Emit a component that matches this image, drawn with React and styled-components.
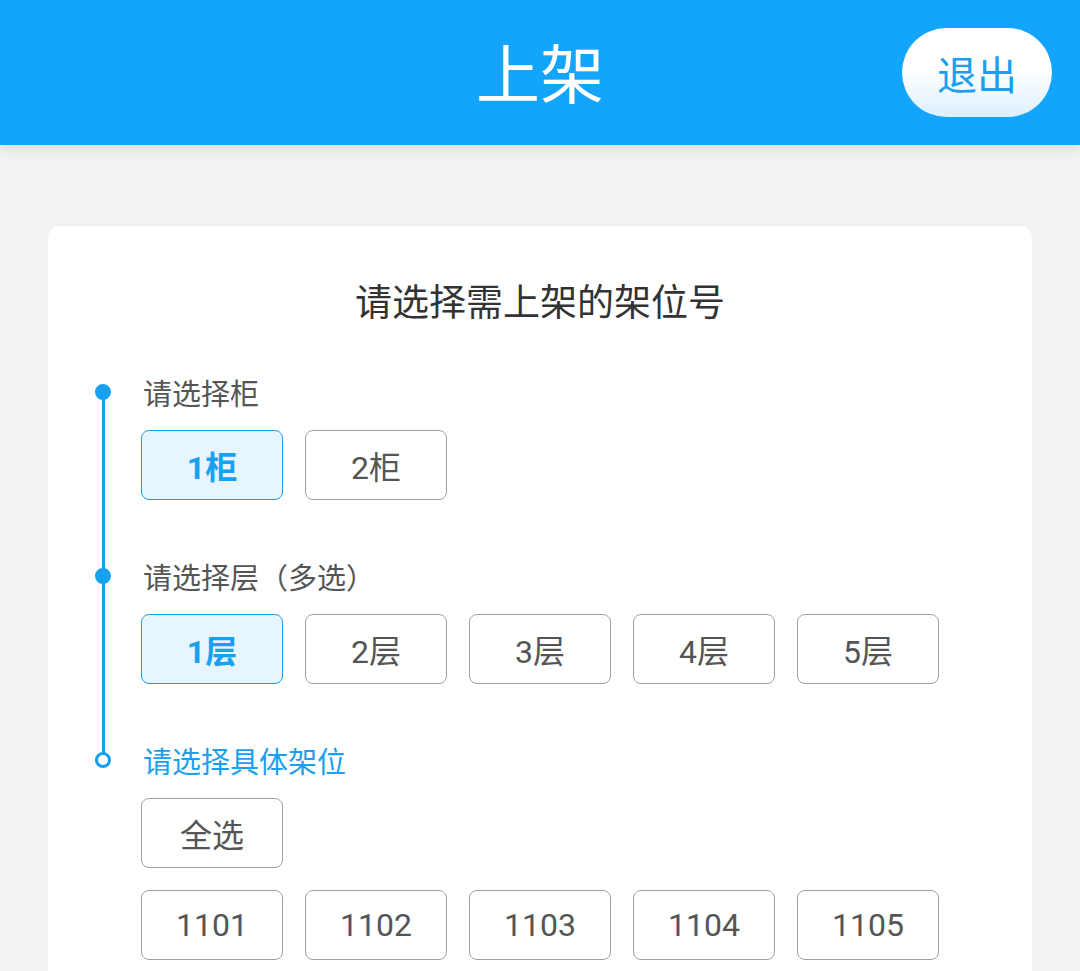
import React, { useState } from "react";
import styled, { createGlobalStyle, css } from "styled-components";

const color = {
    primary: "#12a5fb",
    accent: "#1aa0f0",
    text: "#333333",
    label: "#555555",
    border: "#a0a0a0",
    page: "#f2f2f2",
};

const GlobalStyle = createGlobalStyle`
    html, body {
        margin: 0;
        padding: 0;
        background: ${color.page};
        font-family: "Noto Sans CJK SC", "Noto Sans", sans-serif;
    }
    * {
        box-sizing: border-box;
    }
`;

const Page = styled.div`
    min-height: 971px;
    background: ${color.page};
    overflow: hidden;
`;

const Header = styled.header`
    position: relative;
    height: 145px;
    background: ${color.primary};
    box-shadow: 0 4px 10px rgba(60, 90, 130, 0.15);
    display: flex;
    align-items: center;
    justify-content: center;
`;

const Title = styled.h1`
    margin: 0 0 6px;
    color: #fff;
    font-size: 64px;
    font-weight: 400;
    line-height: 1;
`;

const ExitButton = styled.button`
    position: absolute;
    right: 28px;
    top: 28px;
    width: 150px;
    height: 89px;
    border: none;
    border-radius: 45px;
    background: linear-gradient(to bottom, #ffffff 45%, #dcf0fd 100%);
    color: ${color.accent};
    font-family: inherit;
    font-size: 40px;
    cursor: pointer;
`;

const Card = styled.main`
    margin: 81px 48px 0;
    min-height: 800px;
    background: #fff;
    border-radius: 12px;
    padding: 50px 0 0 93px;
`;

const CardTitle = styled.h2`
    margin: 0 0 48px -93px;
    text-align: center;
    font-size: 37px;
    line-height: 48px;
    font-weight: 400;
    color: ${color.text};
`;

const Step = styled.section`
    position: relative;
    margin-bottom: 56px;

    &::before {
        content: "";
        position: absolute;
        left: -46px;
        top: 12px;
        width: 16px;
        height: 16px;
        border-radius: 50%;
        box-sizing: border-box;
        background: ${(p) => (p.$open ? "#fff" : color.accent)};
        border: 3px solid ${color.accent};
        z-index: 1;
    }

    ${(p) =>
        !p.$last &&
        css`
            &::after {
                content: "";
                position: absolute;
                left: -39.5px;
                top: 20px;
                bottom: -76px;
                width: 3px;
                background: ${color.accent};
            }
        `}
`;

const Label = styled.div`
    font-size: 29px;
    line-height: 40px;
    color: ${(p) => (p.$active ? color.accent : color.label)};
    margin-left: 2px;
`;

const Options = styled.div`
    display: flex;
    flex-wrap: wrap;
    gap: 22px;
    margin-top: ${(p) => (p.$tight ? "22px" : "18px")};
    max-width: 820px;
`;

const Option = styled.button`
    width: 142px;
    height: 70px;
    border-radius: 8px;
    border: 1px solid ${(p) => (p.$selected ? color.accent : color.border)};
    background: ${(p) => (p.$selected ? "#e6f5fe" : "#fff")};
    color: ${(p) => (p.$selected ? color.accent : color.label)};
    font-family: Roboto, "Noto Sans CJK SC", sans-serif;
    font-size: 32px;
    font-weight: ${(p) => (p.$selected ? 700 : 400)};
    cursor: pointer;
    padding: 0;
`;

const cabinets = ["1柜", "2柜"];
const layers = ["1层", "2层", "3层", "4层", "5层"];
const slots = ["1101", "1102", "1103", "1104", "1105"];

const App = () => {
    const [cabinet, setCabinet] = useState("1柜");
    const [picked, setPicked] = useState(["1层"]);

    const toggle = (l) =>
        setPicked((prev) =>
            prev.includes(l) ? prev.filter((x) => x !== l) : [...prev, l]
        );

    return (
        <Page>
            <GlobalStyle />
            <Header>
                <Title>上架</Title>
                <ExitButton>退出</ExitButton>
            </Header>
            <Card>
                <CardTitle>请选择需上架的架位号</CardTitle>
                <Step>
                    <Label>请选择柜</Label>
                    <Options>
                        {cabinets.map((c) => (
                            <Option
                                key={c}
                                $selected={cabinet === c}
                                onClick={() => setCabinet(c)}
                            >
                                {c}
                            </Option>
                        ))}
                    </Options>
                </Step>
                <Step>
                    <Label>请选择层（多选）</Label>
                    <Options>
                        {layers.map((l) => (
                            <Option
                                key={l}
                                $selected={picked.includes(l)}
                                onClick={() => toggle(l)}
                            >
                                {l}
                            </Option>
                        ))}
                    </Options>
                </Step>
                <Step $last $open>
                    <Label $active>请选择具体架位</Label>
                    <Options>
                        <Option>全选</Option>
                    </Options>
                    <Options $tight>
                        {slots.map((s) => (
                            <Option key={s}>{s}</Option>
                        ))}
                    </Options>
                </Step>
            </Card>
        </Page>
    );
};

export default App;
